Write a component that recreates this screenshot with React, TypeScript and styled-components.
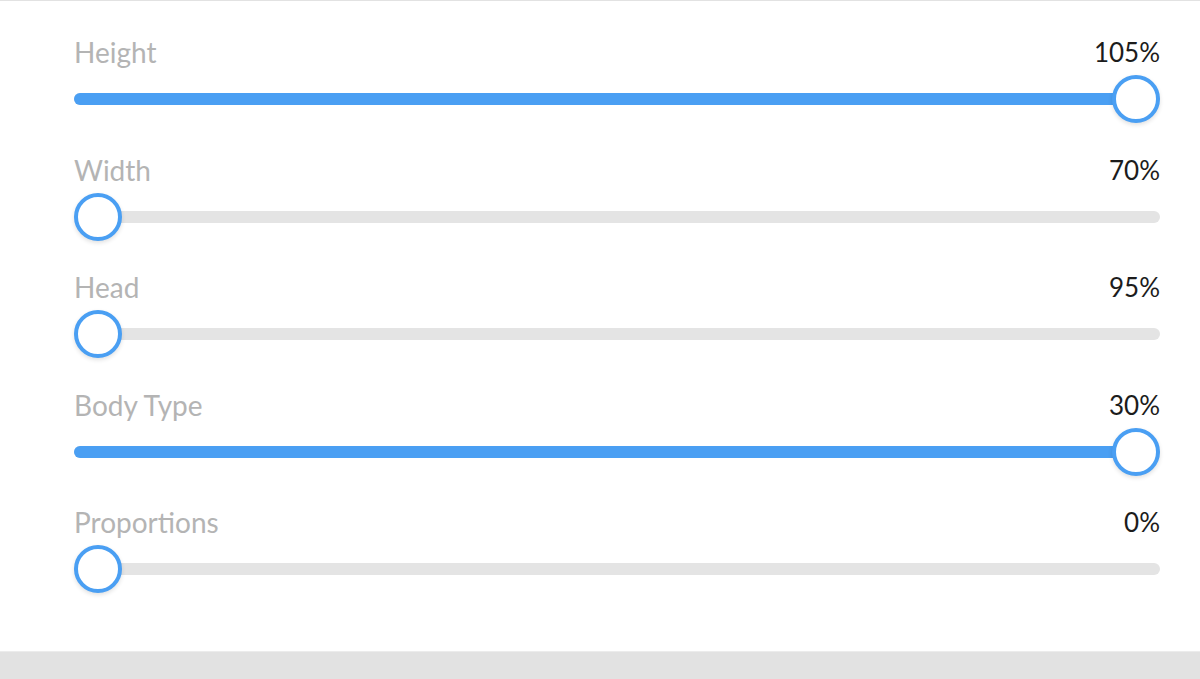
import React from "react";
import styled, { createGlobalStyle } from "styled-components";

const Global = createGlobalStyle`
  html, body { margin: 0; padding: 0; background: #ffffff; }
  body { font-family: Lato, "Open Sans", "Liberation Sans", sans-serif; }
  * { box-sizing: border-box; }
`;

const Page = styled.div`
  width: 1200px;
  height: 679px;
  display: flex;
  flex-direction: column;
  border-top: 1px solid #e2e2e2;
  background: #ffffff;
  overflow: hidden;
`;

const List = styled.div`
  flex: 1;
  display: flex;
  flex-direction: column;
  padding: 34px 40px 0 74px;
`;

const Row = styled.div`
  height: 117.5px;
  flex: none;
  display: flex;
  flex-direction: column;
`;

const Header = styled.div`
  display: flex;
  justify-content: space-between;
  align-items: center;
  height: 34px;
  margin-bottom: 6px;
`;

const Label = styled.span`
  font-size: 28px;
  color: #b4b4b4;
  line-height: 34px;
`;

const Value = styled.span`
  font-size: 26px;
  color: #1c1c1c;
  line-height: 34px;
`;

const SliderBox = styled.div`
  position: relative;
  height: 48px;
  display: flex;
  align-items: center;
`;

const Track = styled.div`
  position: relative;
  width: 100%;
  height: 12px;
  border-radius: 6px;
  background: #e4e4e4;
`;

const Fill = styled.div`
  position: absolute;
  left: 0;
  top: 0;
  bottom: 0;
  border-radius: 6px;
  background: #4a9ff3;
`;

const Thumb = styled.div`
  position: absolute;
  top: 0;
  width: 48px;
  height: 48px;
  border-radius: 50%;
  background: #ffffff;
  border: 4px solid #4a9ff3;
  box-shadow: 0 2px 4px rgba(0, 0, 0, 0.12);
`;

const Footer = styled.div`
  height: 28px;
  flex: none;
  background: #e2e2e2;
  border-top: 1px solid #ececec;
`;

type Item = { label: string; value: string; pos: number };

const items: Item[] = [
  { label: "Height", value: "105%", pos: 1 },
  { label: "Width", value: "70%", pos: 0 },
  { label: "Head", value: "95%", pos: 0 },
  { label: "Body Type", value: "30%", pos: 1 },
  { label: "Proportions", value: "0%", pos: 0 },
];

const TRACK_W = 1086;
const THUMB = 48;

function Slider({ pos }: { pos: number }) {
  const left = pos * (TRACK_W - THUMB);
  return (
    <SliderBox>
      <Track>
        {pos > 0 && <Fill style={{ width: left + THUMB / 2 }} />}
      </Track>
      <Thumb style={{ left }} />
    </SliderBox>
  );
}

export default function App() {
  return (
    <Page>
      <Global />
      <List>
        {items.map((it) => (
          <Row key={it.label}>
            <Header>
              <Label>{it.label}</Label>
              <Value>{it.value}</Value>
            </Header>
            <Slider pos={it.pos} />
          </Row>
        ))}
      </List>
      <Footer />
    </Page>
  );
}
